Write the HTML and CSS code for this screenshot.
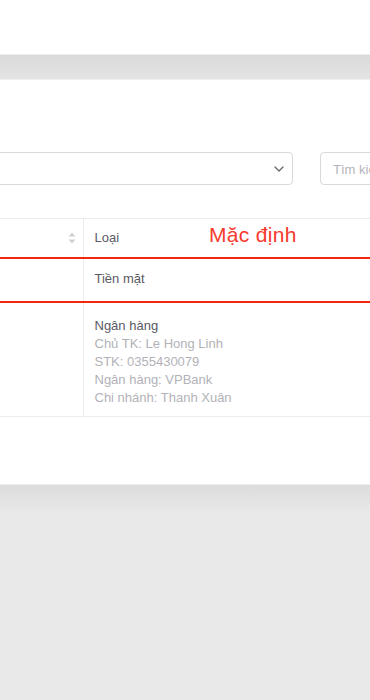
FILE: index.html
```html
<!DOCTYPE html>
<html lang="vi">
<head>
  <meta charset="UTF-8" />
  <meta name="viewport" content="width=device-width, initial-scale=1.0"/>
  <title>Phương thức thanh toán</title>
  <link rel="stylesheet" href="styles.css">
</head>
<body>
  <header class="topbar"></header>
  <div class="band"></div>

  <main class="card">
    <div class="toolbar">
      <div class="select">
        <svg class="chevron" width="10" height="6" viewBox="0 0 10 6"><path d="M1 1l4 4 4-4" fill="none" stroke="#666" stroke-width="1.3" stroke-linecap="round" stroke-linejoin="round"/></svg>
      </div>
      <div class="search">Tìm kiếm</div>
    </div>

    <div class="table-wrap">
      <table>
        <thead>
          <tr>
            <th class="col-name">
              <svg class="sorter" width="8" height="12" viewBox="0 0 8 12"><path d="M4 0.5L7.5 4.5H0.5z M4 11.5L0.5 7.5H7.5z" fill="#cfcfd4"/></svg>
            </th>
            <th>Loại</th>
          </tr>
        </thead>
        <tbody>
          <tr class="marked">
            <td class="col-name"></td>
            <td>Tiền mặt</td>
          </tr>
          <tr class="bank">
            <td class="col-name"></td>
            <td>
              <div>Ngân hàng</div>
              <div class="sub">Chủ TK: Le Hong Linh</div>
              <div class="sub">STK: 0355430079</div>
              <div class="sub">Ngân hàng: VPBank</div>
              <div class="sub">Chi nhánh: Thanh Xuân</div>
            </td>
          </tr>
        </tbody>
      </table>
      <span class="note">Mặc định</span>
    </div>
  </main>

  <div class="floor"></div>
</body>
</html>
```

FILE: styles.css
```css
* {
  margin: 0;
  padding: 0;
  box-sizing: border-box;
  font-family: 'Liberation Sans', Arial, sans-serif;
}

body {
  background: #e9e9e9;
  overflow: hidden;
  width: 370px;
  height: 700px;
}

.topbar {
  height: 54px;
  background: #ffffff;
}

.band {
  height: 26px;
  background: linear-gradient(#dadada, #e4e4e4);
  border-top: 1px solid #efefef;
  border-bottom: 1px solid #f1f1f1;
}

.card {
  background: #ffffff;
  padding: 72px 0 67px;
}

.toolbar {
  display: flex;
  gap: 27px;
  margin-left: -10px;
  height: 33px;
}

.select {
  flex: 0 0 303px;
  border: 1px solid #d9d9de;
  border-radius: 4px;
  display: flex;
  align-items: center;
  justify-content: flex-end;
  padding-right: 8px;
}

.search {
  flex: 0 0 200px;
  border: 1px solid #d9d9de;
  border-radius: 4px;
  padding: 9px 12px;
  font-size: 13px;
  color: #b4b4b9;
}

.table-wrap {
  position: relative;
  margin-top: 33px;
}

table {
  width: 100%;
  border-collapse: collapse;
  table-layout: fixed;
  border-top: 1px solid #ececf0;
}

th, td {
  text-align: left;
  vertical-align: top;
  font-size: 13px;
  font-weight: normal;
  color: #595963;
  padding: 0 11px;
  border-bottom: 1px solid #ececf0;
  border-left: 1px solid #ececf0;
}

.col-name {
  width: 83px;
  border-left: none;
  text-align: right;
  padding-right: 7px;
}

th {
  height: 39px;
  vertical-align: middle;
}

.sorter {
  display: block;
  margin-left: auto;
}

tbody td {
  padding-top: 11px;
  line-height: 18px;
}

.marked td {
  height: 44px;
  border-top: 2px solid #f4260c;
  border-bottom: 2px solid #f4260c;
}

.bank td {
  height: 115px;
  padding-top: 14px;
}

.sub {
  color: #b2b2b8;
}

.note {
  position: absolute;
  left: 209px;
  top: 5px;
  font-size: 21px;
  letter-spacing: 0.3px;
  color: #f63a2e;
}

.floor {
  height: 30px;
  background: linear-gradient(#dcdcdc, #e9e9e9);
  border-top: 1px solid #eeeeee;
}
```
